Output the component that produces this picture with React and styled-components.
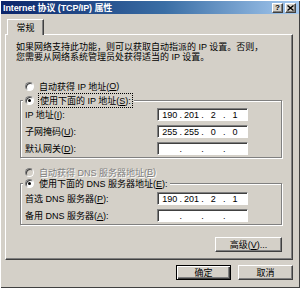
import React, { Fragment } from "react";
import styled, { createGlobalStyle, css } from "styled-components";

const GlobalStyle = createGlobalStyle`
  html, body {
    margin: 0;
    padding: 0;
    background: #d4d0c8;
  }
  body {
    font-family: "Liberation Sans", "Noto Sans CJK SC", sans-serif;
    font-size: 9px;
    color: #000000;
  }
`;

const raised = css`
  border: 1px solid;
  border-color: #ffffff #404040 #404040 #ffffff;
  box-shadow: inset -1px -1px #808080;
`;

const sunken = css`
  border: 1px solid;
  border-color: #808080 #ffffff #ffffff #808080;
  box-shadow: inset 1px 1px #404040;
`;

const Window = styled.div`
  width: 300px;
  height: 288px;
  box-sizing: border-box;
  padding: 1px 1px 0 1px;
  background: #d4d0c8;
  box-shadow: inset 1px 1px #ffffff, inset -1px -1px #404040;
  display: flex;
  flex-direction: column;
`;

const TitleBar = styled.div`
  height: 13px;
  flex-shrink: 0;
  display: flex;
  align-items: center;
  padding: 0 3px 0 2px;
  background: linear-gradient(to right, #0a246a, #3a6ea5 55%, #a6caf0);
  color: #ffffff;
  font-weight: bold;
  font-size: 9px;
  white-space: nowrap;
`;

const TitleText = styled.span`
  flex: 1;
  letter-spacing: -0.1px;
`;

const TitleButtons = styled.div`
  display: flex;
  gap: 2px;
`;

const TitleButton = styled.div`
  ${raised};
  box-sizing: border-box;
  width: 11px;
  height: 10px;
  background: #d4d0c8;
  color: #000000;
  display: flex;
  align-items: center;
  justify-content: center;
  font-size: 8px;
  font-weight: bold;
  line-height: 1;
`;

const Body = styled.div`
  flex: 1;
  display: flex;
  flex-direction: column;
  padding: 5px 6px 0 4px;
`;

const TabStrip = styled.div`
  height: 15px;
  display: flex;
  padding-left: 2px;
`;

const Tab = styled.div`
  position: relative;
  box-sizing: border-box;
  width: 37px;
  height: 16px;
  margin-bottom: -1px;
  background: #d4d0c8;
  border-top: 1px solid #ffffff;
  border-left: 1px solid #ffffff;
  border-right: 1px solid #404040;
  box-shadow: inset -1px 0 #808080;
  display: flex;
  align-items: center;
  justify-content: center;
`;

const Panel = styled.div`
  ${raised};
  box-sizing: border-box;
  height: 226px;
  display: flex;
  flex-direction: column;
`;

const Description = styled.div`
  margin: 7px 0 0 10px;
  line-height: 10px;
  white-space: nowrap;
`;

const RadioRow = styled.div`
  display: flex;
  align-items: center;
  height: 12px;
  margin: ${(p) => p.$top || 0}px 0 0 19px;
  white-space: nowrap;
  color: ${(p) => (p.$disabled ? "#808080" : "#000000")};
  text-shadow: ${(p) => (p.$disabled ? "1px 1px #ffffff" : "none")};
`;

const RadioCircle = styled.span`
  box-sizing: border-box;
  width: 9px;
  height: 9px;
  border-radius: 50%;
  border: 1px solid;
  border-color: #808080 #ffffff #ffffff #808080;
  background: ${(p) => (p.$disabled ? "#d4d0c8" : "#ffffff")};
  box-shadow: inset 1px 1px #404040;
  display: flex;
  align-items: center;
  justify-content: center;
  margin-right: 5px;
  flex-shrink: 0;
`;

const RadioDot = styled.span`
  width: 3px;
  height: 3px;
  border-radius: 50%;
  background: #000000;
`;

const FocusText = styled.span`
  outline: 1px dotted #000000;
  outline-offset: 0;
  padding: 0 1px;
`;

const Group = styled.fieldset`
  margin: ${(p) => p.$top || 0}px 10px 0 14px;
  padding: 0 4px 2px 4px;
  border: 1px solid #808080;
  box-shadow: inset 1px 1px #ffffff, 1px 1px #ffffff;
  min-width: 0;
`;

const Legend = styled.legend`
  margin-left: -2px;
  padding: 0 2px;
  height: 11px;
  display: flex;
  align-items: center;
  white-space: nowrap;
  background: #d4d0c8;
`;

const FieldRows = styled.div`
  display: flex;
  flex-direction: column;
  gap: 4px;
  margin-top: ${(p) => p.$top || 0}px;
`;

const FieldRow = styled.div`
  display: grid;
  grid-template-columns: 132px 91px;
  align-items: center;
  height: 13px;
  white-space: nowrap;
`;

const IpBox = styled.div`
  ${sunken};
  box-sizing: border-box;
  height: 13px;
  background: #ffffff;
  display: flex;
  align-items: center;
  padding: 0 3px;
  font-family: "Liberation Sans", sans-serif;
  font-size: 9px;
`;

const Octet = styled.span`
  flex: 1;
  text-align: center;
`;

const Dot = styled.span`
  width: 4px;
  text-align: center;
`;

const ButtonBase = styled.div`
  ${raised};
  box-sizing: border-box;
  height: 15px;
  background: #d4d0c8;
  display: flex;
  align-items: center;
  justify-content: center;
  white-space: nowrap;
`;

const AdvancedButton = styled(ButtonBase)`
  width: 67px;
  margin: 12px 10px 0 auto;
`;

const ButtonRow = styled.div`
  display: flex;
  justify-content: flex-end;
  gap: 7px;
  margin-top: 5px;
`;

const DialogButton = styled(ButtonBase)`
  width: 55px;
  ${(p) =>
    p.$default &&
    css`
      outline: 1px solid #000000;
      outline-offset: -1px;
      border-color: #000000;
      box-shadow: inset 1px 1px #ffffff, inset -1px -1px #404040,
        inset -2px -2px #808080;
    `}
`;

const Key = styled.u`
  text-decoration: underline;
`;

function Radio({ checked, disabled }) {
  return (
    <RadioCircle $disabled={disabled}>{checked && <RadioDot />}</RadioCircle>
  );
}

function IpField({ value }) {
  const parts = value || ["", "", "", ""];
  return (
    <IpBox>
      {parts.map((part, i) => (
        <Fragment key={i}>
          {i > 0 && <Dot>.</Dot>}
          <Octet>{part}</Octet>
        </Fragment>
      ))}
    </IpBox>
  );
}

function CloseGlyph() {
  return (
    <svg width="7" height="6" viewBox="0 0 7 6">
      <path d="M0.5 0.5 L6.5 5.5 M6.5 0.5 L0.5 5.5" stroke="#000" strokeWidth="1.4" />
    </svg>
  );
}

export default function App() {
  return (
    <Fragment>
      <GlobalStyle />
      <Window>
        <TitleBar>
          <TitleText>Internet 协议 (TCP/IP) 属性</TitleText>
          <TitleButtons>
            <TitleButton>?</TitleButton>
            <TitleButton>
              <CloseGlyph />
            </TitleButton>
          </TitleButtons>
        </TitleBar>
        <Body>
          <TabStrip>
            <Tab>常规</Tab>
          </TabStrip>
          <Panel>
            <Description>
              如果网络支持此功能，则可以获取自动指派的 IP 设置。否则，
              <br />
              您需要从网络系统管理员处获得适当的 IP 设置。
            </Description>

            <RadioRow $top={18}>
              <Radio />
              自动获得 IP 地址(<Key>O</Key>)
            </RadioRow>

            <Group $top={3}>
              <Legend>
                <Radio checked />
                <FocusText>
                  使用下面的 IP 地址(<Key>S</Key>):
                </FocusText>
              </Legend>
              <FieldRows $top={2}>
                <FieldRow>
                  <span>
                    IP 地址(<Key>I</Key>):
                  </span>
                  <IpField value={["190", "201", "2", "1"]} />
                </FieldRow>
                <FieldRow>
                  <span>
                    子网掩码(<Key>U</Key>):
                  </span>
                  <IpField value={["255", "255", "0", "0"]} />
                </FieldRow>
                <FieldRow>
                  <span>
                    默认网关(<Key>D</Key>):
                  </span>
                  <IpField />
                </FieldRow>
              </FieldRows>
            </Group>

            <RadioRow $top={8} $disabled>
              <Radio disabled />
              自动获得 DNS 服务器地址(<Key>B</Key>)
            </RadioRow>

            <Group>
              <Legend>
                <Radio checked />
                使用下面的 DNS 服务器地址(<Key>E</Key>):
              </Legend>
              <FieldRows $top={3}>
                <FieldRow>
                  <span>
                    首选 DNS 服务器(<Key>P</Key>):
                  </span>
                  <IpField value={["190", "201", "2", "1"]} />
                </FieldRow>
                <FieldRow>
                  <span>
                    备用 DNS 服务器(<Key>A</Key>):
                  </span>
                  <IpField />
                </FieldRow>
              </FieldRows>
            </Group>

            <AdvancedButton>
              高级(<Key>V</Key>)...
            </AdvancedButton>
          </Panel>
          <ButtonRow>
            <DialogButton $default>确定</DialogButton>
            <DialogButton>取消</DialogButton>
          </ButtonRow>
        </Body>
      </Window>
    </Fragment>
  );
}
